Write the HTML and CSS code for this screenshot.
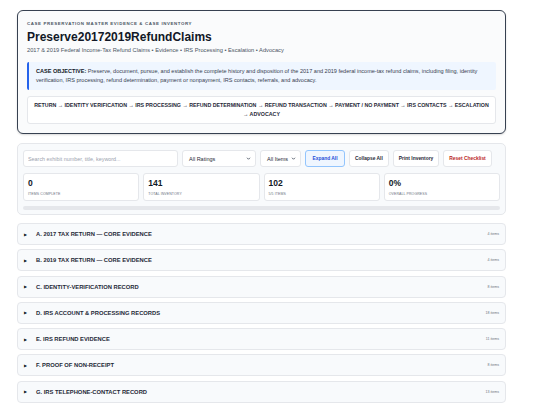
FILE: index.html
```html
<!DOCTYPE html>
<html lang="en">
<head>
    <meta charset="UTF-8">
    <meta name="viewport" content="width=device-width, initial-scale=1.0">
    <title>Preserve20172019RefundClaims</title>
    <link rel="stylesheet" href="styles.css">
</head>
<body>
    <div class="wrap">
        <!-- Case header -->
        <header class="case-header">
            <div class="eyebrow">Case Preservation Master Evidence &amp; Case Inventory</div>
            <h1>Preserve20172019RefundClaims</h1>
            <div class="subtitle">2017 &amp; 2019 Federal Income-Tax Refund Claims • Evidence • IRS Processing • Escalation • Advocacy</div>
            <div class="objective">
                <strong>CASE OBJECTIVE:</strong> Preserve, document, pursue, and establish the complete history and disposition of the 2017 and 2019 federal income-tax refund claims, including filing, identity verification, IRS processing, refund determination, payment or nonpayment, IRS contacts, referrals, and advocacy.
            </div>
            <div class="flow">RETURN → IDENTITY VERIFICATION → IRS PROCESSING → REFUND DETERMINATION → REFUND TRANSACTION → PAYMENT / NO PAYMENT → IRS CONTACTS → ESCALATION → ADVOCACY</div>
        </header>

        <!-- Toolbar + stats -->
        <section class="panel">
            <div class="toolbar">
                <input type="text" class="search" placeholder="Search exhibit number, title, keyword...">
                <div class="select ratings">All Ratings
                    <svg viewBox="0 0 10 10" width="5" height="5"><path d="M2 3.5 L5 6.5 L8 3.5" fill="none" stroke="#374151" stroke-width="1.6"/></svg>
                </div>
                <div class="select items">All Items
                    <svg viewBox="0 0 10 10" width="5" height="5"><path d="M2 3.5 L5 6.5 L8 3.5" fill="none" stroke="#374151" stroke-width="1.6"/></svg>
                </div>
                <button class="btn btn-primary">Expand All</button>
                <button class="btn">Collapse All</button>
                <button class="btn">Print Inventory</button>
                <button class="btn btn-danger">Reset Checklist</button>
            </div>
            <div class="stats">
                <div class="stat"><div class="num">0</div><div class="label">Items Complete</div></div>
                <div class="stat"><div class="num">141</div><div class="label">Total Inventory</div></div>
                <div class="stat"><div class="num">102</div><div class="label">5/5 Items</div></div>
                <div class="stat"><div class="num">0%</div><div class="label">Overall Progress</div></div>
            </div>
            <div class="progress"><div class="progress-fill" style="width: 0%"></div></div>
        </section>

        <!-- Sections -->
        <div class="sections">
            <div class="section"><span class="caret">▶</span><span class="title">A. 2017 Tax Return — Core Evidence</span><span class="count">4 items</span></div>
            <div class="section"><span class="caret">▶</span><span class="title">B. 2019 Tax Return — Core Evidence</span><span class="count">4 items</span></div>
            <div class="section"><span class="caret">▶</span><span class="title">C. Identity-Verification Record</span><span class="count">8 items</span></div>
            <div class="section"><span class="caret">▶</span><span class="title">D. IRS Account &amp; Processing Records</span><span class="count">18 items</span></div>
            <div class="section"><span class="caret">▶</span><span class="title">E. IRS Refund Evidence</span><span class="count">11 items</span></div>
            <div class="section"><span class="caret">▶</span><span class="title">F. Proof of Non-Receipt</span><span class="count">8 items</span></div>
            <div class="section"><span class="caret">▶</span><span class="title">G. IRS Telephone-Contact Record</span><span class="count">13 items</span></div>
        </div>
    </div>
</body>
</html>
```

FILE: styles.css
```css
/* General */
body, html {
    margin: 0;
    padding: 0;
    background: #fff;
    font-family: "Liberation Sans", Arial, sans-serif;
    color: #1f2937;
}

.wrap {
    width: 489px;
    margin: 10px 0 0 17px;
}

/* Header */
.case-header {
    border: 1px solid #374151;
    border-bottom-width: 1.5px;
    border-radius: 6px;
    background: #fafbfc;
    padding: 9px 9px 9px 9px;
    box-shadow: 0 1px 2px rgba(0, 0, 0, 0.15);
}

.eyebrow {
    font-size: 4.4px;
    font-weight: bold;
    letter-spacing: 0.6px;
    text-transform: uppercase;
    color: #4b5563;
    margin-top: 1px;
}

.case-header h1 {
    font-size: 12px;
    margin: 4px 0 3px;
    color: #111827;
    line-height: 14px;
}

.subtitle {
    font-size: 5.7px;
    color: #4b5563;
}

.objective {
    margin-top: 9px;
    background: #eff6ff;
    border-left: 2px solid #2563eb;
    border-radius: 2px;
    padding: 5px 7px;
    font-size: 5.55px;
    line-height: 9px;
    color: #374151;
}

.objective strong {
    color: #111827;
}

.flow {
    margin-top: 6px;
    background: #fff;
    border: 1px solid #e5e7eb;
    border-radius: 3px;
    padding: 4px 6px;
    font-size: 5.3px;
    line-height: 9px;
    font-weight: bold;
    text-align: center;
    color: #1f2937;
}

/* Toolbar panel */
.panel {
    margin-top: 9px;
    border: 1px solid #e5e7eb;
    border-radius: 5px;
    background: #f8fafc;
    padding: 6px 5px 4px 5px;
}

.toolbar {
    display: flex;
    gap: 4px;
    height: 17px;
}

.search, .select, .btn {
    box-sizing: border-box;
    height: 17px;
    border: 1px solid #e5e7eb;
    border-radius: 3px;
    background: #fff;
    font-family: "Liberation Sans", Arial, sans-serif;
}

.search {
    width: 155px;
    padding: 0 4px;
    font-size: 5.4px;
    color: #374151;
    outline: none;
}

.search::placeholder {
    color: #9ca3af;
}

.select {
    display: flex;
    align-items: center;
    justify-content: space-between;
    padding: 0 4px 0 6px;
    font-size: 5.5px;
    color: #1f2937;
}

.ratings { width: 74px; }
.items { width: 41px; }

.btn {
    padding: 0 5px;
    font-size: 4.9px;
    font-weight: bold;
    color: #1f2937;
    cursor: pointer;
}

.btn-primary {
    background: #eff6ff;
    border-color: #93c5fd;
    color: #1d4ed8;
    width: 40px;
}

.btn-danger {
    color: #b91c1c;
}

/* Stats */
.stats {
    display: grid;
    grid-template-columns: repeat(4, 1fr);
    gap: 4px;
    margin-top: 6px;
}

.stat {
    height: 28px;
    box-sizing: border-box;
    background: #fff;
    border: 1px solid #e5e7eb;
    border-radius: 3px;
    padding: 5px 4px;
}

.stat .num {
    font-size: 8.5px;
    font-weight: bold;
    color: #111827;
    line-height: 9px;
}

.stat .label {
    margin-top: 4px;
    font-size: 3.5px;
    text-transform: uppercase;
    color: #6b7280;
    letter-spacing: 0.1px;
}

.progress {
    margin-top: 5px;
    height: 4px;
    border-radius: 2px;
    background: #e5e7eb;
    overflow: hidden;
}

.progress-fill {
    height: 100%;
    background: #2563eb;
}

/* Sections */
.sections {
    margin-top: 8px;
    display: flex;
    flex-direction: column;
    gap: 4.3px;
}

.section {
    display: flex;
    align-items: center;
    height: 22px;
    box-sizing: border-box;
    border: 1px solid #e5e7eb;
    border-radius: 4px;
    background: #f8fafc;
    padding: 0 6px;
}

.caret {
    font-size: 4px;
    color: #111827;
    width: 12px;
}

.title {
    font-size: 5.8px;
    font-weight: bold;
    text-transform: uppercase;
    color: #1f2937;
    flex: 1;
}

.count {
    font-size: 3.6px;
    color: #6b7280;
}
```
